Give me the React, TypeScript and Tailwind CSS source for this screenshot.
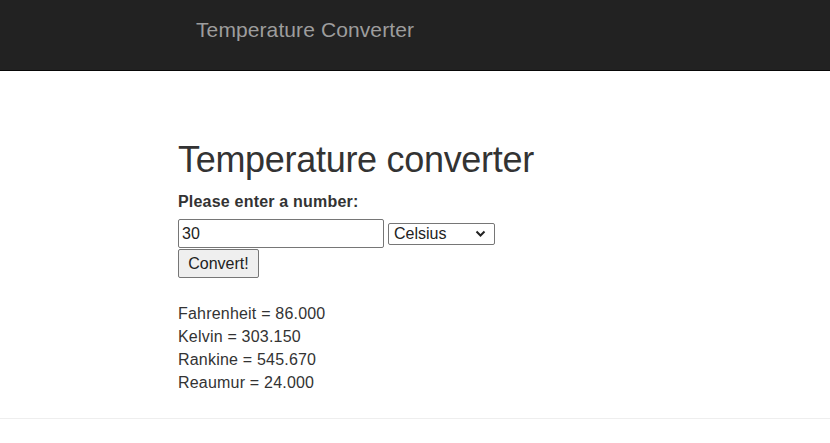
import React from "react";

export default function App() {
  const font = { fontFamily: '"Liberation Sans", Arial, sans-serif' };
  return (
    <div className="min-h-[443px] bg-white text-[#333] text-[16px] leading-[23px]" style={font}>
      <nav className="h-[71px] bg-[#222] border-b border-[#080808] pl-[196px]">
        <div className="pt-[15px] text-[21px] leading-[29px] text-[#9d9d9d] tracking-[0.1px]">Temperature Converter</div>
      </nav>
      <main className="pl-[178px] pt-[69px]">
        <h1 className="text-[36px] leading-[40px] mb-[10px] tracking-[-0.3px]">Temperature converter</h1>
        <label className="block font-bold mb-[6px] tracking-[0.2px]">Please enter a number:</label>
        <div className="flex items-center gap-[4px]">
          <input
            defaultValue="30"
            className="w-[206px] h-[29px] border border-[#767676] rounded-[2px] px-[3px] text-[16px] text-[#222] outline-none"
            style={font}
          />
          <div className="relative w-[107px] h-[22px] border border-[#767676] rounded-[2px] flex items-center pl-[5px] text-[16px] text-[#222]">
            <span>Celsius</span>
            <svg className="absolute right-[8px] top-[6px]" width="11" height="8" viewBox="0 0 11 8">
              <path d="M1.5 1.5 L5.5 5.5 L9.5 1.5" fill="none" stroke="#222" strokeWidth="2" />
            </svg>
          </div>
        </div>
        <button
          className="mt-[1px] w-[81px] h-[29px] bg-[#efefef] border border-[#767676] rounded-[2px] text-[16px] text-[#222] flex items-center justify-center"
          style={font}
        >
          Convert!
        </button>
        <div className="mt-[24px] tracking-[0.2px]">
          <div>Fahrenheit = 86.000</div>
          <div>Kelvin = 303.150</div>
          <div>Rankine = 545.670</div>
          <div>Reaumur = 24.000</div>
        </div>
      </main>
      <hr className="mt-[24px] border-0 border-t border-[#eee]" />
    </div>
  );
}
